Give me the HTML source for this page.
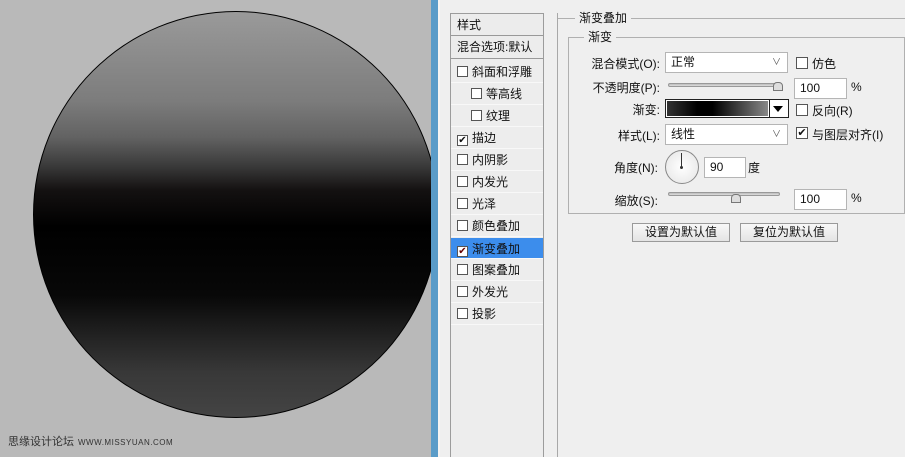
<!DOCTYPE html>
<html><head><meta charset="utf-8"><style>
*{margin:0;padding:0;box-sizing:border-box}
body{width:905px;height:457px;overflow:hidden;position:relative;background:#efefef;font-family:"Liberation Sans","Noto Sans CJK SC",sans-serif;font-size:12px;color:#111}
.abs{position:absolute}
#canvas{left:0;top:0;width:431px;height:457px;background:#b9b9b9;overflow:hidden}
#circle{left:33px;top:11px;width:406px;height:407px;border-radius:50%;border:1.5px solid #000;
background:linear-gradient(#9a9a9a 0%,#7c7c7c 22%,#626262 31%,#3a3a3a 38%,#141111 44%,#000 53%,#080808 70%,#222 80%,#383838 89%,#444 100%)}
#wm{left:8px;top:433px;font-size:11px;color:#333;white-space:nowrap}
#wm span{font-size:8px;letter-spacing:.5px;margin-left:4px}
#blue{left:431px;top:0;width:7px;height:457px;background:#5b9cc8}
#sep{left:438px;top:0;width:2px;height:457px;background:#f6f4f2}
#list{left:450px;top:13px;width:94px;height:444px;border:1px solid #9c9c9c;border-bottom:none;background:#ededed}
.it{position:absolute;left:0;width:92px;height:22px;line-height:22px;padding-left:6px;white-space:nowrap;border-bottom:1px solid #f8f8f8}
.cb{display:inline-block;width:11px;height:11px;border:1px solid #555;background:#fff;vertical-align:-1px;margin-right:4px;position:relative;font-size:10px;line-height:9px;text-align:center}
.acb{position:absolute;width:12px;height:12px;border:1px solid #555;background:#fff;font-size:11px;line-height:10px;text-align:center}
.hd{border-bottom:1px solid #999;background:#ececec}
.sel{background:#3c8dec}
#vline{left:557px;top:13px;width:1px;height:444px;background:#a8a8a8}
.grp{border:1px solid #b0b0b0}
.lbl{position:absolute;background:#efefef;padding:0 4px}
.inp{position:absolute;background:#fff;border:1px solid #b5b5b5;height:21px;line-height:19px;padding-left:5px}
.r{position:absolute;text-align:right;white-space:nowrap}
.sl{position:absolute;height:4px;border:1px solid #999;border-radius:2px;background:linear-gradient(#bbb,#ddd)}
.btn{position:absolute;height:19px;border:1px solid #9a9a9a;background:linear-gradient(#f8f8f8,#e4e4e4);text-align:center;line-height:17px}
</style></head><body>
<div id="canvas" class="abs"><div id="circle" class="abs"></div>
<div id="wm" class="abs">思缘设计论坛<span>WWW.MISSYUAN.COM</span></div></div>
<div id="blue" class="abs"></div><div id="sep" class="abs"></div>
<div id="list" class="abs">
<div class="it hd" style="top:0">样式</div>
<div class="it hd" style="top:22px;height:23px">混合选项:默认</div>
<div class="it" style="top:47px"><span class="cb"></span>斜面和浮雕</div>
<div class="it" style="top:69px;padding-left:20px"><span class="cb"></span>等高线</div>
<div class="it" style="top:91px;padding-left:20px"><span class="cb"></span>纹理</div>
<div class="it" style="top:113px"><span class="cb">✔</span>描边</div>
<div class="it" style="top:135px"><span class="cb"></span>内阴影</div>
<div class="it" style="top:157px"><span class="cb"></span>内发光</div>
<div class="it" style="top:179px"><span class="cb"></span>光泽</div>
<div class="it" style="top:201px"><span class="cb"></span>颜色叠加</div>
<div class="it sel" style="top:224px;height:21px"><span class="cb" style="color:#600">✔</span>渐变叠加</div>
<div class="it" style="top:245px"><span class="cb"></span>图案叠加</div>
<div class="it" style="top:267px"><span class="cb"></span>外发光</div>
<div class="it" style="top:289px"><span class="cb"></span>投影</div>
</div>
<div id="vline" class="abs"></div>
<div class="abs" style="left:558px;top:18px;width:347px;height:1px;background:#b0b0b0"></div>
<div class="lbl" style="left:575px;top:9px">渐变叠加</div>
<div class="abs grp" style="left:568px;top:37px;width:337px;height:177px"></div>
<div class="lbl" style="left:584px;top:28px">渐变</div>
<div class="r" style="left:570px;width:90px;top:55px">混合模式(O):</div>
<div class="inp" style="left:665px;top:52px;width:123px">正常<span style="position:absolute;right:6px;font-size:9px;color:#555">∨</span></div>
<span class="acb" style="left:796px;top:57px"></span><div class="abs" style="left:812px;top:55px">仿色</div>
<div class="r" style="left:570px;width:90px;top:79px">不透明度(P):</div>
<div class="sl" style="left:668px;top:83px;width:114px"></div>
<div class="abs" style="left:773px;top:82px;width:10px;height:9px;background:#ddd;border:1px solid #777;border-radius:4px 4px 0 0"></div>
<div class="inp" style="left:794px;top:78px;width:53px">100</div><div class="abs" style="left:851px;top:80px">%</div>
<div class="r" style="left:570px;width:90px;top:101px">渐变:</div>
<div class="abs" style="left:665px;top:99px;width:124px;height:19px;border:1px solid #222;background:#fff"><div style="position:absolute;left:1px;top:1px;width:101px;height:15px;background:linear-gradient(90deg,#333,#000 30%,#000 45%,#888)"></div><div style="position:absolute;left:103px;top:0;width:1px;height:17px;background:#222"></div><div style="position:absolute;left:107px;top:6px;border-left:5px solid transparent;border-right:5px solid transparent;border-top:6px solid #000"></div></div>
<span class="acb" style="left:796px;top:104px"></span><div class="abs" style="left:812px;top:102px">反向(R)</div>
<div class="r" style="left:570px;width:90px;top:127px">样式(L):</div>
<div class="inp" style="left:665px;top:124px;width:123px">线性<span style="position:absolute;right:6px;font-size:9px;color:#555">∨</span></div>
<span class="acb" style="left:796px;top:127px">✔</span><div class="abs" style="left:812px;top:126px">与图层对齐(I)</div>
<div class="r" style="left:570px;width:88px;top:159px">角度(N):</div>
<div class="abs" style="left:665px;top:150px;width:34px;height:34px;border-radius:50%;border:1px solid #888;background:radial-gradient(#fff,#e4e4e4)"><div style="position:absolute;left:15px;top:2px;width:1px;height:14px;background:#333"></div><div style="position:absolute;left:14px;top:15px;width:3px;height:3px;border-radius:50%;background:#333"></div></div>
<div class="inp" style="left:704px;top:157px;width:42px">90</div><div class="abs" style="left:748px;top:159px">度</div>
<div class="r" style="left:570px;width:88px;top:192px">缩放(S):</div>
<div class="sl" style="left:668px;top:192px;width:112px"></div>
<div class="abs" style="left:731px;top:194px;width:10px;height:9px;background:#ddd;border:1px solid #777;border-radius:4px 4px 0 0"></div>
<div class="inp" style="left:794px;top:189px;width:53px">100</div><div class="abs" style="left:851px;top:191px">%</div>
<div class="btn" style="left:632px;top:223px;width:98px">设置为默认值</div>
<div class="btn" style="left:740px;top:223px;width:98px">复位为默认值</div>
</body></html>
